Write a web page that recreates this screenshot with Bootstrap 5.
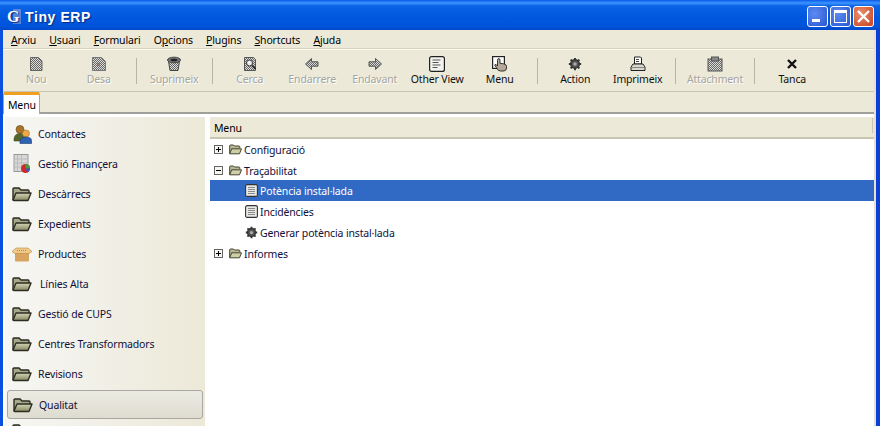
<!DOCTYPE html>
<html lang="en">
<head>
<meta charset="UTF-8" />
<title>Tiny ERP</title>
<link href="https://cdn.jsdelivr.net/npm/bootstrap@5.3.3/dist/css/bootstrap.min.css" rel="stylesheet" />
<style>
  html, body { height: 426px; overflow: hidden; }
  body { font-family: "Noto Sans", "DejaVu Sans", sans-serif; font-size: 10.5px; letter-spacing: -.15px; line-height: 14px; color: #10103a; background: #ece9d8; }
  svg { display: block; flex: none; }
  .xp-window { height: 426px; background: linear-gradient(90deg, #0a50e0 0, #0a50e0 3px, #fff 3px, #fff 876px, #0a3fd8 876px); }
  .xp-title { height: 30px; padding: 3px 6px 0 6px; background: linear-gradient(180deg, #0a5ae8 0, #3d95ff 3px, #0a62e6 6px, #0058e0 18px, #0054dc 26px, #0048c8 30px); color: #fff; font-size: 14px; font-weight: 700; font-family: "Liberation Sans", sans-serif; text-shadow: 1px 1px 1px #0a2a80; letter-spacing: .6px; }
  .xp-winbtn { width: 21px; height: 21px; border: 1px solid #fff; border-radius: 3px; margin-left: 2px; background: radial-gradient(circle at 35% 35%, #5c8cf2, #2a54d0); }
  .xp-winbtn.close-red { background: radial-gradient(circle at 35% 35%, #ea9070, #c8401c); }
  .xp-body { margin: 0 4px 0 3px; background: #ece9d8; height: 396px; border-right: 2px solid #e4e1d0; }
  .xp-menubar { height: 19px; padding: 3px 0 0 8px; column-gap: 13.2px; color: #000; border-bottom: 1px solid #d8d4c0; }
  .xp-toolbar { height: 43px; padding: 0 0 0 2px; border-top: 1px solid #fbfaf3; border-bottom: 1px solid #c8c5b2; }
  .tool-item { width: 62.5px; color: #101010; padding-top: 6px; }
  .tool-item.tool-wide { width: 66px; }
  .tool-item span { white-space: nowrap; }
  .tool-item.is-off { color: #a5a5a0; text-shadow: 1px 1px 0 #fff; }
  .tool-sep { width: 1px; height: 26px; background: #b8b5a4; margin: 8px 6px 0 6px; }
  .tool-gear { margin: 1px 0; }
  .xp-tabs { height: 22px; border-bottom: 2px solid #a0a09a; padding-left: 0; }
  .xp-tab { width: 37px; height: 22px; margin-bottom: -2px; background: #fff; border: 1px solid #a8a89e; border-bottom: 0; border-top: 3px solid #f0a020; border-radius: 2px 2px 0 0; color: #000; padding: 3px 0 0 4px; }
  .xp-main { height: 312px; background: #fff; padding: 3px 0 0 2px; }
  .side-panel { width: 200px; margin-right: 5px; height: 310px; overflow: hidden; padding-top: 2px; border-radius: 0; background: linear-gradient(90deg, #f6f6f4, #ece9d8); }
  .side-item { flex: none; height: 30px; padding: 0 0 0 7px; gap: 6px; color: #10103a; background: transparent; border: 0; border-radius: 0; }
  .side-item.is-picked { margin: 1px 2px 0 2px; height: 29px; padding-left: 5px; border: 1px solid #a8a8a0; border-radius: 3px; background: linear-gradient(180deg, #ecebe3, #dedcd0); }
  .side-shift { margin-left: 2px; }
  .tree-panel { width: 664px; }
  .tree-head { flex: none; height: 22px; background: #ece9d8; border-bottom: 2px solid #c8c5b2; padding: 4px 0 0 4px; color: #000; position: relative; }
  .tree-head::after { content: ""; position: absolute; right: 1px; top: 1px; width: 1px; height: 15px; background: #c8c5b2; }
  .tree-row { height: 21px; color: #10103a; padding: 0; border: 0; background: transparent; border-radius: 0; }
  .tree-row.active { background: #316ac5; color: #fff; margin: 0; }
  .tree-toggle { margin: 0 6px 0 4px; }
  .tree-folder { margin-right: 2px; }
  .tree-leaf { margin: 0 2px 0 35px; }
</style>
</head>
<body>
<svg width="0" height="0" class="position-absolute">
  <defs>
    <pattern id="dither" width="2" height="2" patternUnits="userSpaceOnUse"><rect width="2" height="2" fill="#dcdcd8"/><rect width="1" height="1" fill="#666"/><rect x="1" y="1" width="1" height="1" fill="#666"/></pattern>
    <linearGradient id="folderFill" x1="0" y1="0" x2="0" y2="1"><stop offset="0" stop-color="#d4d6b8"/><stop offset="1" stop-color="#858862"/></linearGradient>
    <symbol id="big-folder" viewBox="0 0 20 16"><path d="M1 14V3q0-1 1-1h5l2 2h7q1 0 1 1v2" fill="#a8a88a" stroke="#2c2c22" stroke-width="1.400"/><path d="M1 14l3-7h15l-3 7.500H2z" fill="url(#folderFill)" stroke="#2c2c22" stroke-width="1.400" stroke-linejoin="round"/></symbol>
    <symbol id="small-folder" viewBox="0 0 13 11"><path d="M.7 9.600V1.800q0-.8.8-.8h3l1 1h4.500q.8 0 .8.8v1.400" fill="#b8b898" stroke="#45452f"/><path d="M.7 9.800l2-5h9.800l-2 5z" fill="#cfcfa8" stroke="#45452f" stroke-linejoin="round"/></symbol>
    <symbol id="box-plus" viewBox="0 0 9 9"><rect x=".5" y=".5" width="8" height="8" fill="#f6f6f0" stroke="#666"/><path d="M2 4.500h5M4.500 2v5" stroke="#000"/></symbol>
    <symbol id="box-minus" viewBox="0 0 9 9"><rect x=".5" y=".5" width="8" height="8" fill="#f6f6f0" stroke="#666"/><path d="M2 4.500h5" stroke="#000"/></symbol>
    <symbol id="list-doc" viewBox="0 0 13 13"><rect x=".6" y=".6" width="11.800" height="11.800" rx="1.500" fill="#e8e8e4" stroke="#333" stroke-width="1.100"/><path d="M3 3.500h7M3 5.500h7M3 7.500h7M3 9.500h7" stroke="#8a8a8a"/></symbol>
    <symbol id="gear" viewBox="0 0 16 16"><circle cx="8" cy="8" r="5" fill="#555" stroke="#333" stroke-width="1.400"/><path d="M8 1v3M8 12v3M1 8h3M12 8h3M3 3l2.200 2.200M10.800 10.800L13 13M13 3l-2.200 2.200M5.200 10.800L3 13" stroke="#333" stroke-width="2.200"/><circle cx="8" cy="8" r="2" fill="#aaa"/></symbol>
  </defs>
</svg>

<div class="xp-window d-flex flex-column">
  <div class="xp-title d-flex align-items-center">
    <svg width="15" height="15" viewBox="0 0 15 15"><rect x="7" width="8" height="15" fill="#5a86dc"/><text x="1" y="13" font-family="Liberation Serif" font-weight="700" font-size="16" fill="#fff">G</text></svg>
    <span class="ms-1">Tiny ERP</span>
    <div class="ms-auto d-flex">
      <div class="xp-winbtn d-flex align-items-end"><svg width="19" height="19"><rect x="4" y="12" width="8" height="3" fill="#fff"/></svg></div>
      <div class="xp-winbtn"><svg width="19" height="19"><rect x="3.500" y="3.500" width="12" height="12" fill="none" stroke="#fff"/><rect x="3" y="3" width="13" height="3" fill="#fff"/></svg></div>
      <div class="xp-winbtn close-red"><svg width="19" height="19"><path d="M4 4l11 11M15 4L4 15" stroke="#fff" stroke-width="2.400"/></svg></div>
    </div>
  </div>

  <div class="xp-body d-flex flex-column">
    <div class="xp-menubar d-flex">
      <span><u>A</u>rxiu</span><span><u>U</u>suari</span><span><u>F</u>ormulari</span><span>O<u>p</u>cions</span><span><u>P</u>lugins</span><span><u>S</u>hortcuts</span><span><u>A</u>juda</span>
    </div>

    <div class="xp-toolbar d-flex">
      <div class="tool-item is-off d-flex flex-column align-items-center">
        <svg width="16" height="16" viewBox="0 0 16 16"><path d="M2.500 1.500h8l3.500 3.500v9.500h-11.500z" fill="url(#dither)" stroke="#666"/></svg><span>Nou</span></div>
      <div class="tool-item is-off d-flex flex-column align-items-center">
        <svg width="16" height="16" viewBox="0 0 16 16"><path d="M1.500 1.500h9l4 4v9h-13z" fill="url(#dither)" stroke="#777"/><path d="M6 7l3 3M9 7l-3 3" stroke="#c98080"/></svg><span>Desa</span></div>
      <div class="tool-sep"></div>
      <div class="tool-item is-off d-flex flex-column align-items-center">
        <svg width="16" height="16" viewBox="0 0 16 16"><path d="M2.500 5l1.500 9.500h8l1.500-9.500z" fill="url(#dither)" stroke="#444"/><ellipse cx="8" cy="4" rx="6.500" ry="2.800" fill="#777" stroke="#444"/><ellipse cx="8" cy="4" rx="3.500" ry="1.300" fill="#222"/></svg><span>Suprimeix</span></div>
      <div class="tool-sep"></div>
      <div class="tool-item is-off d-flex flex-column align-items-center">
        <svg width="16" height="16" viewBox="0 0 16 16"><path d="M2.500 1.500h9l2 2v11h-11z" fill="url(#dither)" stroke="#555"/><circle cx="7.500" cy="7" r="3" fill="#eee" stroke="#333"/><path d="M10 9.500l3.500 3.500" stroke="#222" stroke-width="1.600"/></svg><span>Cerca</span></div>
      <div class="tool-item is-off d-flex flex-column align-items-center">
        <svg width="16" height="16" viewBox="0 0 16 16"><path d="M1.500 8l6-5.500v3.300h6.500v4.400h-6.500v3.300z" fill="url(#dither)" stroke="#555"/></svg><span>Endarrere</span></div>
      <div class="tool-item is-off d-flex flex-column align-items-center">
        <svg width="16" height="16" viewBox="0 0 16 16"><path d="M14.500 8l-6-5.500v3.300h-6.500v4.400h6.500v3.300z" fill="url(#dither)" stroke="#555"/></svg><span>Endavant</span></div>
      <div class="tool-item d-flex flex-column align-items-center">
        <svg width="16" height="16" viewBox="0 0 16 16"><rect x=".6" y=".6" width="14.800" height="14.800" rx="2" fill="#f4f4ee" stroke="#222" stroke-width="1.200"/><path d="M3.500 4h8M3.500 6.500h6M3.500 9h8M3.500 11.500h5" stroke="#555"/></svg><span>Other View</span></div>
      <div class="tool-item d-flex flex-column align-items-center">
        <svg width="16" height="16" viewBox="0 0 16 16"><rect x=".6" y=".6" width="11.800" height="11.800" fill="#fff" stroke="#222" stroke-width="1.200"/><path d="M5.500 4.500q0-2 1.300-2t1.200 2v2.800l3.500.5q3 .5 3 2.500v1.700q0 2.500-2.500 3H8.500Q6 15 5 12.500L2.800 9.300q0-1.300 1.300-.8l1.400 1.500z" fill="#b5a898" stroke="#222" stroke-width=".9"/></svg><span>Menu</span></div>
      <div class="tool-sep"></div>
      <div class="tool-item d-flex flex-column align-items-center">
        <svg class="tool-gear" width="14" height="14"><use href="#gear"/></svg><span>Action</span></div>
      <div class="tool-item d-flex flex-column align-items-center">
        <svg width="16" height="16" viewBox="0 0 16 16"><path d="M4.500 1h6l1 1v6h-7z" fill="#fff" stroke="#222"/><path d="M6 3.500h3M6 5.500h3" stroke="#444"/><path d="M3 8h10l2 3v3.500H1V11z" fill="#d8d8d0" stroke="#222"/><path d="M2 11.500h12" stroke="#888"/></svg><span>Imprimeix</span></div>
      <div class="tool-sep"></div>
      <div class="tool-item tool-wide is-off d-flex flex-column align-items-center">
        <svg width="16" height="16" viewBox="0 0 16 16"><rect x="1" y="3" width="14" height="12" fill="url(#dither)" stroke="#555"/><rect x="4.500" y="1" width="7" height="4" fill="#888" stroke="#555"/></svg><span>Attachment</span></div>
      <div class="tool-sep"></div>
      <div class="tool-item d-flex flex-column align-items-center">
        <svg width="16" height="16" viewBox="0 0 16 16"><path d="M4 4l8 8M12 4l-8 8" stroke="#111" stroke-width="2.400"/></svg><span>Tanca</span></div>
    </div>

    <div class="xp-tabs d-flex"><div class="xp-tab">Menu</div></div>

    <div class="xp-main d-flex">
      <div class="side-panel list-group">
        <div class="side-item list-group-item d-flex align-items-center">
          <svg width="20" height="19" viewBox="0 0 20 19"><circle cx="8" cy="4.500" r="4" fill="#a87428" stroke="#6a4a18" stroke-width=".6"/><path d="M2 16q-.5-7.500 6-7.500t6 7.500z" fill="#56662a" stroke="#3a4620" stroke-width=".6"/><circle cx="14" cy="8.500" r="3.500" fill="#eea848" stroke="#a87428" stroke-width=".6"/><path d="M8 18.500q-1-6.500 6-6.500t5.500 6.500z" fill="#2f62b0" stroke="#1c3e78" stroke-width=".6"/></svg><span>Contactes</span></div>
        <div class="side-item list-group-item d-flex align-items-center">
          <svg width="20" height="20" viewBox="0 0 19 20"><rect x="1.500" y=".5" width="14" height="17" fill="#d8d8d8" stroke="#999"/><path d="M5 1v16M9 1v16M2 5h13M2 9h13M2 13h13" stroke="#bbb"/><circle cx="13" cy="14.500" r="4.500" fill="#d02828"/><path d="M13 14.500V10a4.500 4.500 0 0 1 4.500 4.500z" fill="#40a040"/><path d="M13 14.500h4.500A4.500 4.500 0 0 1 15 18.500z" fill="#3060c0"/></svg><span>Gestió Finançera</span></div>
        <div class="side-item list-group-item d-flex align-items-center"><svg width="20" height="16"><use href="#big-folder"/></svg><span>Descàrrecs</span></div>
        <div class="side-item list-group-item d-flex align-items-center"><svg width="20" height="16"><use href="#big-folder"/></svg><span>Expedients</span></div>
        <div class="side-item list-group-item d-flex align-items-center">
          <svg width="20" height="15" viewBox="0 0 20 15"><path d="M3 5h14v8.500q0 1-1 1H4q-1 0-1-1z" fill="#d8a460"/><path d="M0 4.500L4 1h12l4 3.500-3 2H3z" fill="#f0c888" stroke="#b88840" stroke-width=".6"/><path d="M5 3.500h10" stroke="#a08860" stroke-dasharray="1 1"/></svg><span>Productes</span></div>
        <div class="side-item list-group-item d-flex align-items-center"><svg width="20" height="16"><use href="#big-folder"/></svg><span class="side-shift">Línies Alta</span></div>
        <div class="side-item list-group-item d-flex align-items-center"><svg width="20" height="16"><use href="#big-folder"/></svg><span>Gestió de CUPS</span></div>
        <div class="side-item list-group-item d-flex align-items-center"><svg width="20" height="16"><use href="#big-folder"/></svg><span>Centres Transformadors</span></div>
        <div class="side-item list-group-item d-flex align-items-center"><svg width="20" height="16"><use href="#big-folder"/></svg><span>Revisions</span></div>
        <div class="side-item is-picked list-group-item d-flex align-items-center"><svg width="20" height="16"><use href="#big-folder"/></svg><span>Qualitat</span></div>
        <div class="side-item list-group-item d-flex align-items-start pt-1"><svg width="20" height="16"><use href="#big-folder"/></svg></div>
      </div>

      <div class="tree-panel d-flex flex-column">
        <div class="tree-head">Menu</div>
        <div class="list-group">
          <div class="tree-row list-group-item d-flex align-items-center"><svg class="tree-toggle" width="9" height="9"><use href="#box-plus"/></svg><svg class="tree-folder" width="13" height="11"><use href="#small-folder"/></svg><span>Configuració</span></div>
          <div class="tree-row list-group-item d-flex align-items-center"><svg class="tree-toggle" width="9" height="9"><use href="#box-minus"/></svg><svg class="tree-folder" width="13" height="11"><use href="#small-folder"/></svg><span>Traçabilitat</span></div>
          <div class="tree-row list-group-item active d-flex align-items-center"><svg class="tree-leaf" width="13" height="13"><use href="#list-doc"/></svg><span>Potència instal·lada</span></div>
          <div class="tree-row list-group-item d-flex align-items-center"><svg class="tree-leaf" width="13" height="13"><use href="#list-doc"/></svg><span>Incidències</span></div>
          <div class="tree-row list-group-item d-flex align-items-center"><svg class="tree-leaf" width="13" height="13"><use href="#gear"/></svg><span>Generar potència instal·lada</span></div>
          <div class="tree-row list-group-item d-flex align-items-center"><svg class="tree-toggle" width="9" height="9"><use href="#box-plus"/></svg><svg class="tree-folder" width="13" height="11"><use href="#small-folder"/></svg><span>Informes</span></div>
        </div>
      </div>
    </div>
  </div>
</div>
<script src="https://cdn.jsdelivr.net/npm/bootstrap@5.3.3/dist/js/bootstrap.bundle.min.js"></script>
</body>
</html>
